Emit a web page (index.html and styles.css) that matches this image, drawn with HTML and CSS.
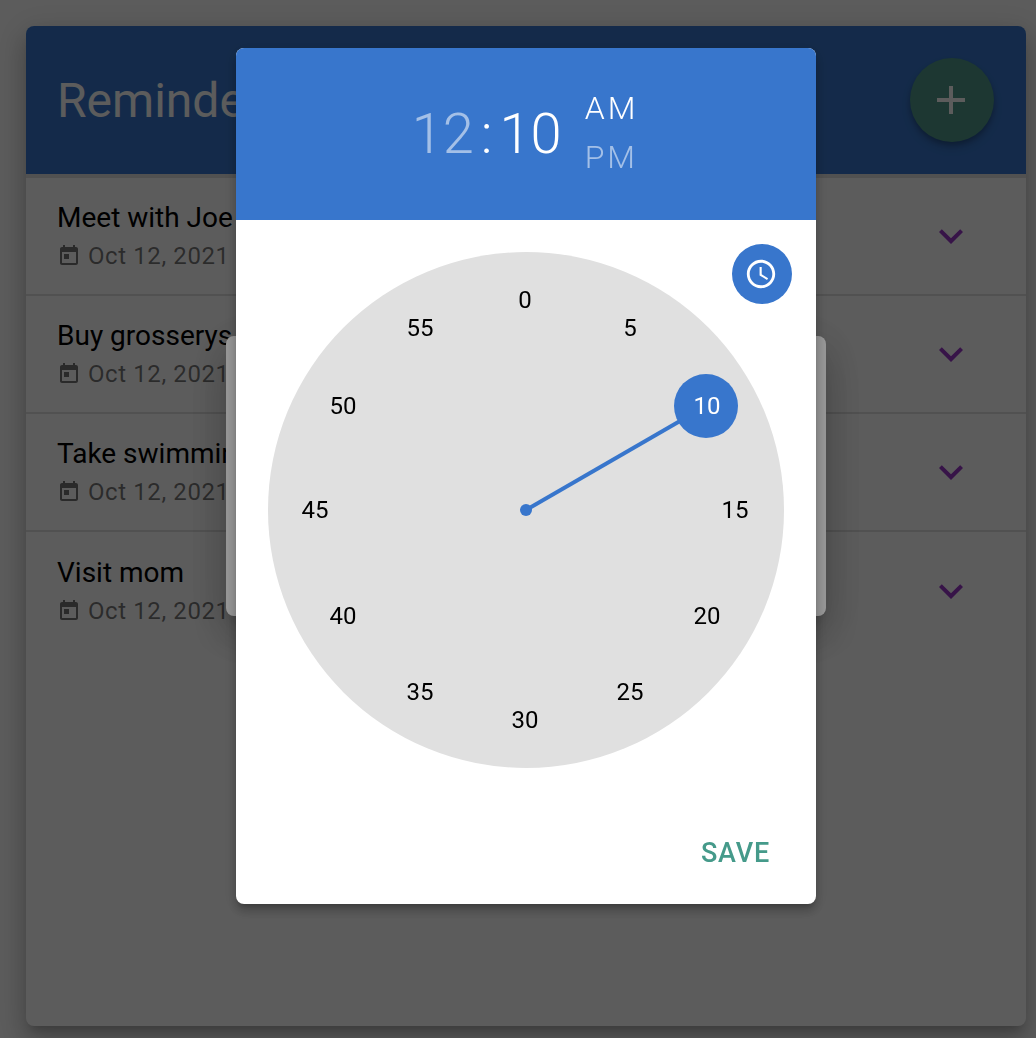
FILE: index.html
```html
<!DOCTYPE html>
<html lang="en">
<head>
<meta charset="utf-8">
<title>Reminders</title>
<link rel="stylesheet" href="styles.css">
</head>
<body>
<div class="app">
  <main class="card">
    <header class="card-header">
      <h1 class="title">Reminders</h1>
      <button class="fab" aria-label="Add">
        <svg class="fab-icon" viewBox="0 0 24 24"><path d="M19 13h-6v6h-2v-6H5v-2h6V5h2v6h6v2z"/></svg>
      </button>
    </header>
    <ul class="list">
      <li class="row">
        <div class="row-text">
          <div class="row-title">Meet with Joe</div>
          <div class="row-date"><svg class="cal" viewBox="0 0 24 24"><path d="M19 3h-1V1h-2v2H8V1H6v2H5c-1.11 0-1.99.9-1.99 2L3 19c0 1.1.89 2 2 2h14c1.1 0 2-.9 2-2V5c0-1.1-.9-2-2-2zm0 16H5V8h14v11zM7 10h5v5H7z"/></svg>Oct 12, 2021</div>
        </div>
        <svg class="chev" viewBox="0 0 24 24"><path d="M16.59 8.59L12 13.17 7.41 8.59 6 10l6 6 6-6z"/></svg>
      </li>
      <li class="row">
        <div class="row-text">
          <div class="row-title">Buy grosserys</div>
          <div class="row-date"><svg class="cal" viewBox="0 0 24 24"><path d="M19 3h-1V1h-2v2H8V1H6v2H5c-1.11 0-1.99.9-1.99 2L3 19c0 1.1.89 2 2 2h14c1.1 0 2-.9 2-2V5c0-1.1-.9-2-2-2zm0 16H5V8h14v11zM7 10h5v5H7z"/></svg>Oct 12, 2021</div>
        </div>
        <svg class="chev" viewBox="0 0 24 24"><path d="M16.59 8.59L12 13.17 7.41 8.59 6 10l6 6 6-6z"/></svg>
      </li>
      <li class="row">
        <div class="row-text">
          <div class="row-title">Take swimming lessons</div>
          <div class="row-date"><svg class="cal" viewBox="0 0 24 24"><path d="M19 3h-1V1h-2v2H8V1H6v2H5c-1.11 0-1.99.9-1.99 2L3 19c0 1.1.89 2 2 2h14c1.1 0 2-.9 2-2V5c0-1.1-.9-2-2-2zm0 16H5V8h14v11zM7 10h5v5H7z"/></svg>Oct 12, 2021</div>
        </div>
        <svg class="chev" viewBox="0 0 24 24"><path d="M16.59 8.59L12 13.17 7.41 8.59 6 10l6 6 6-6z"/></svg>
      </li>
      <li class="row">
        <div class="row-text">
          <div class="row-title">Visit mom</div>
          <div class="row-date"><svg class="cal" viewBox="0 0 24 24"><path d="M19 3h-1V1h-2v2H8V1H6v2H5c-1.11 0-1.99.9-1.99 2L3 19c0 1.1.89 2 2 2h14c1.1 0 2-.9 2-2V5c0-1.1-.9-2-2-2zm0 16H5V8h14v11zM7 10h5v5H7z"/></svg>Oct 12, 2021</div>
        </div>
        <svg class="chev" viewBox="0 0 24 24"><path d="M16.59 8.59L12 13.17 7.41 8.59 6 10l6 6 6-6z"/></svg>
      </li>
    </ul>
  </main>
</div>

<div class="scrim">
  <div class="form-dialog"></div>
</div>

<div class="scrim">
  <section class="picker">
    <div class="picker-head">
      <div class="time">
        <span class="dim">12</span><span class="colon">:</span><span>10</span>
      </div>
      <div class="ampm">
        <span>AM</span>
        <span class="dim">PM</span>
      </div>
    </div>
    <div class="picker-body">
      <div class="clock">
        <svg class="hand" viewBox="0 0 516 516">
          <line x1="258" y1="258" x2="438" y2="154"/>
          <circle cx="258" cy="258" r="6"/>
          <circle cx="438" cy="154" r="32"/>
        </svg>
        <span class="num m0">0</span>
        <span class="num m5">5</span>
        <span class="num m10 sel">10</span>
        <span class="num m15">15</span>
        <span class="num m20">20</span>
        <span class="num m25">25</span>
        <span class="num m30">30</span>
        <span class="num m35">35</span>
        <span class="num m40">40</span>
        <span class="num m45">45</span>
        <span class="num m50">50</span>
        <span class="num m55">55</span>
      </div>
      <button class="view-toggle" aria-label="Clock view">
        <svg viewBox="0 0 24 24"><path d="M11.99 2C6.47 2 2 6.48 2 12s4.47 10 9.99 10C17.52 22 22 17.52 22 12S17.52 2 11.99 2zM12 20c-4.42 0-8-3.58-8-8s3.58-8 8-8 8 3.58 8 8-3.58 8-8 8zm.5-13H11v6l5.25 3.15.75-1.23-4.5-2.67z"/></svg>
      </button>
    </div>
    <div class="picker-actions">
      <button class="save">SAVE</button>
    </div>
  </section>
</div>
</body>
</html>
```

FILE: styles.css
```css
* { box-sizing: border-box; }

html, body {
  margin: 0;
  height: 100%;
  overflow: hidden;
}

body {
  background: #fff;
  font-family: Roboto, "Liberation Sans", sans-serif;
  color: #000;
}

.app {
  padding: 26px 10px 12px 26px;
  height: 1038px;
}

.card {
  height: 1000px;
  width: 1000px;
  background: #fff;
  border-radius: 8px;
  overflow: hidden;
  display: flex;
  flex-direction: column;
  box-shadow: 0 8px 10px -5px rgba(0,0,0,.2), 0 16px 24px 2px rgba(0,0,0,.14), 0 6px 30px 5px rgba(0,0,0,.12);
}

.card-header {
  height: 148px;
  flex: none;
  display: flex;
  align-items: center;
  justify-content: space-between;
  padding: 0 32px 0 31px;
  background: #3876cc;
}

.title {
  margin: 0;
  font-size: 48px;
  font-weight: 400;
  color: #fff;
}

.fab {
  width: 84px;
  height: 84px;
  border: 0;
  padding: 0 2px 0 0;
  border-radius: 50%;
  background: #509a8a;
  display: flex;
  align-items: center;
  justify-content: center;
  box-shadow: 0 3px 5px rgba(0,0,0,.2), 0 6px 10px rgba(0,0,0,.14);
}

.fab-icon { width: 48px; height: 48px; fill: #fff; }

.list {
  list-style: none;
  margin: 0;
  padding: 4px 0 0;
  box-shadow: inset 0 4px 0 rgba(0,0,0,.12);
}

.row {
  height: 118px;
  display: flex;
  align-items: center;
  justify-content: space-between;
  padding: 0 51px 0 31px;
  border-bottom: 2px solid rgba(0,0,0,.12);
}

.row:last-child { border-bottom: 0; }

.row-text { padding-top: 2px; }

.row-title {
  font-size: 28px;
  line-height: 34px;
}

.row-date {
  display: flex;
  align-items: center;
  gap: 7px;
  margin-top: 3px;
  font-size: 24px;
  line-height: 36px;
  color: rgba(0,0,0,.54);
  letter-spacing: .6px;
}

.cal { width: 24px; height: 24px; fill: rgba(0,0,0,.54); }

.chev { width: 48px; height: 48px; fill: #9a38c8; }

.scrim {
  position: fixed;
  inset: 0;
  background: rgba(0,0,0,.4);
}

.form-dialog {
  position: absolute;
  left: 226px;
  top: 336px;
  width: 600px;
  height: 280px;
  background: #fff;
  border-radius: 8px;
  box-shadow: 0 11px 15px -7px rgba(0,0,0,.2), 0 24px 38px 3px rgba(0,0,0,.14), 0 9px 46px 8px rgba(0,0,0,.12);
}

.picker {
  margin: 48px 0 0 236px;
  width: 580px;
  height: 856px;
  background: #fff;
  border-radius: 8px;
  overflow: hidden;
  display: flex;
  flex-direction: column;
  box-shadow: 0 5px 5px -3px rgba(0,0,0,.2), 0 8px 10px 1px rgba(0,0,0,.14), 0 3px 14px 2px rgba(0,0,0,.12);
}

.picker-head {
  height: 172px;
  flex: none;
  background: #3876cc;
  color: #fff;
  display: flex;
  align-items: center;
  justify-content: center;
  gap: 23px;
  padding-right: 2px;
}

.dim { opacity: .54; }

.time {
  font-size: 56px;
  font-weight: 300;
  line-height: 72px;
  display: flex;
  align-items: center;
}

.colon { margin: 0 7px; }

.ampm {
  display: flex;
  flex-direction: column;
  gap: 10px;
  padding-bottom: 2px;
  font-size: 32px;
  font-weight: 300;
  line-height: 39px;
  letter-spacing: 3px;
}

.picker-body {
  position: relative;
  flex: 1;
  padding: 32px 0 0 32px;
}

.clock {
  position: relative;
  width: 516px;
  height: 516px;
  border-radius: 50%;
  background: #e0e0e0;
}

.hand {
  position: absolute;
  inset: 0;
  width: 516px;
  height: 516px;
  fill: #3876cc;
}

.hand line { stroke: #3876cc; stroke-width: 4; }

.num {
  position: absolute;
  transform: translate(-50%, -50%);
  font-size: 24px;
  line-height: 32px;
}

.sel { color: #fff; }

.m0  { left: 257px; top: 48px; }
.m5  { left: 362px; top: 76px; }
.m10 { left: 439px; top: 154px; }
.m15 { left: 467px; top: 258px; }
.m20 { left: 439px; top: 364px; }
.m25 { left: 362px; top: 440px; }
.m30 { left: 257px; top: 468px; }
.m35 { left: 152px; top: 440px; }
.m40 { left: 75px; top: 364px; }
.m45 { left: 47px; top: 258px; }
.m50 { left: 75px; top: 154px; }
.m55 { left: 152px; top: 76px; }

.view-toggle {
  position: absolute;
  right: 24px;
  top: 24px;
  width: 60px;
  height: 60px;
  border: 0;
  padding: 0 2px 0 0;
  border-radius: 50%;
  background: #3876cc;
  display: flex;
  align-items: center;
  justify-content: center;
}

.view-toggle svg { width: 34px; height: 34px; fill: #fff; }

.picker-actions {
  flex: none;
  display: flex;
  justify-content: flex-end;
  padding: 0 46px 31px 0;
}

.save {
  border: 0;
  padding: 0;
  background: none;
  font-family: inherit;
  font-size: 27px;
  font-weight: 500;
  line-height: 40px;
  letter-spacing: .8px;
  color: #459a8a;
}
```
